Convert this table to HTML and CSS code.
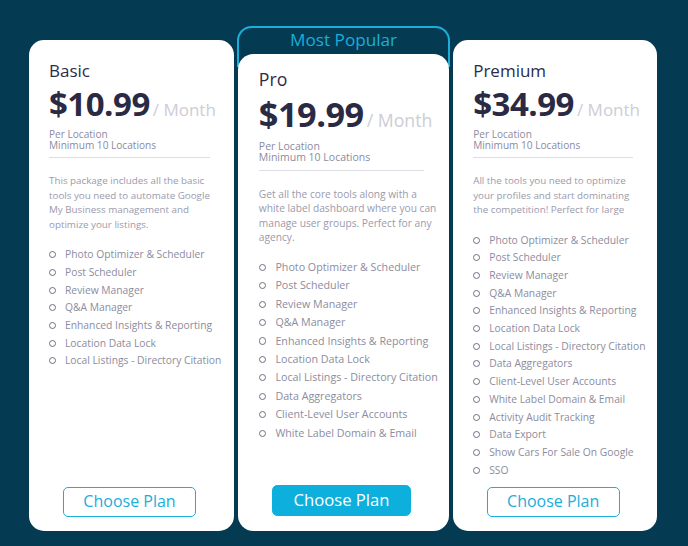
FILE: index.html
```html
<!DOCTYPE html>
<html lang="en">
<head>
<meta charset="utf-8">
<title>Pricing</title>
<link rel="stylesheet" href="styles.css">
</head>
<body>
<main class="plans">
  <section class="card card-basic">
    <h2 class="plan-name">Basic</h2>
    <div class="price"><span class="amount">$10.99</span><span class="period">/ Month</span></div>
    <p class="meta">Per Location<br>Minimum 10 Locations</p>
    <hr class="divider">
    <p class="desc">This package includes all the basic tools you need to automate Google My Business management and optimize your listings.</p>
    <ul class="features">
      <li>Photo Optimizer &amp; Scheduler</li>
      <li>Post Scheduler</li>
      <li>Review Manager</li>
      <li>Q&amp;A Manager</li>
      <li>Enhanced Insights &amp; Reporting</li>
      <li>Location Data Lock</li>
      <li>Local Listings - Directory Citation</li>
    </ul>
    <a class="btn" href="#">Choose Plan</a>
  </section>

  <div class="popular">
    <div class="popular-label">Most Popular</div>
    <section class="card card-pro">
      <h2 class="plan-name">Pro</h2>
      <div class="price"><span class="amount">$19.99</span><span class="period">/ Month</span></div>
      <p class="meta">Per Location<br>Minimum 10 Locations</p>
      <hr class="divider">
      <p class="desc">Get all the core tools along with a white label dashboard where you can manage user groups. Perfect for any agency.</p>
      <ul class="features">
        <li>Photo Optimizer &amp; Scheduler</li>
        <li>Post Scheduler</li>
        <li>Review Manager</li>
        <li>Q&amp;A Manager</li>
        <li>Enhanced Insights &amp; Reporting</li>
        <li>Location Data Lock</li>
        <li>Local Listings - Directory Citation</li>
        <li>Data Aggregators</li>
        <li>Client-Level User Accounts</li>
        <li>White Label Domain &amp; Email</li>
      </ul>
      <a class="btn btn-solid" href="#">Choose Plan</a>
    </section>
  </div>

  <section class="card card-premium">
    <h2 class="plan-name">Premium</h2>
    <div class="price"><span class="amount">$34.99</span><span class="period">/ Month</span></div>
    <p class="meta">Per Location<br>Minimum 10 Locations</p>
    <hr class="divider">
    <p class="desc">All the tools you need to optimize your profiles and start dominating the competition! Perfect for large</p>
    <ul class="features">
      <li>Photo Optimizer &amp; Scheduler</li>
      <li>Post Scheduler</li>
      <li>Review Manager</li>
      <li>Q&amp;A Manager</li>
      <li>Enhanced Insights &amp; Reporting</li>
      <li>Location Data Lock</li>
      <li>Local Listings - Directory Citation</li>
      <li>Data Aggregators</li>
      <li>Client-Level User Accounts</li>
      <li>White Label Domain &amp; Email</li>
      <li>Activity Audit Tracking</li>
      <li>Data Export</li>
      <li>Show Cars For Sale On Google</li>
      <li>SSO</li>
    </ul>
    <a class="btn" href="#">Choose Plan</a>
  </section>
</main>
</body>
</html>
```

FILE: styles.css
```css
* { box-sizing: border-box; }

html, body {
  margin: 0;
  padding: 0;
  background: #043a52;
  height: 546px;
  overflow: hidden;
}

body {
  font-family: "Open Sans", "Liberation Sans", sans-serif;
}

.plans {
  display: flex;
  align-items: flex-end;
  gap: 3px;
  height: 531px;
  padding-left: 29px;
}

.card {
  display: flex;
  flex-direction: column;
  width: 205px;
  height: 491px;
  background: #ffffff;
  border-radius: 15px;
  padding: 21px 12px 14px 20px;
}

.card-premium { width: 204px; }

.popular {
  zoom: 1.04;
  width: 205px;
  display: flex;
  flex-direction: column;
}

.popular-label {
  height: 40px;
  margin-bottom: -13px;
  border: 2px solid #1aaed9;
  border-bottom: 0;
  border-radius: 14px 14px 0 0;
  color: #1aaed9;
  font-size: 16.5px;
  line-height: 24px;
  text-align: center;
}

.card-pro {
  width: auto;
  margin: 0 1px;
  height: 459px;
  padding-top: 15px;
}

.plan-name {
  margin: 0;
  font-size: 17px;
  font-weight: 400;
  line-height: 20px;
  color: #2d2c47;
}

.price {
  margin-top: 5px;
  line-height: 36px;
  white-space: nowrap;
}

.amount {
  font-size: 33px;
  font-weight: 700;
  color: #2b2a45;
  letter-spacing: -0.5px;
}

.period {
  margin-left: 3px;
  font-size: 17px;
  color: #cdcdd6;
}

.meta {
  margin: 1px 0 0;
  font-size: 10.1px;
  line-height: 11px;
  color: #8b8ba0;
}

.divider {
  margin: 6px 12px 0 0;
  border: 0;
  border-top: 1px solid #dcdce2;
  height: 0;
}

.desc {
  margin: 16px 0 0;
  font-size: 9.8px;
  line-height: 14.6px;
  color: #9a9aac;
}

.card-pro .desc {
  margin-top: 15.5px;
  line-height: 13.9px;
}

.features {
  list-style: none;
  margin: 13px 0 0;
  padding: 0;
}

.card-pro .features {
  margin-top: 12.5px;
}

.features li {
  display: flex;
  align-items: center;
  gap: 9px;
  height: 17.7px;
  font-size: 10.3px;
  color: #8c8c9e;
  white-space: nowrap;
}

.features li::before {
  content: "";
  flex: none;
  width: 5px;
  height: 5px;
  margin-top: 1px;
  border: 1.5px solid #6f6f82;
  border-radius: 50%;
}

.btn {
  margin: auto 12px 0 0;
  align-self: center;
  width: 133px;
  height: 30px;
  border: 1.5px solid #1aaed9;
  border-radius: 5px;
  color: #1aaed9;
  font-size: 16px;
  line-height: 27px;
  text-align: center;
  text-decoration: none;
}

.btn-solid {
  background: #0db0dc;
  border-color: #0db0dc;
  color: #ffffff;
}
```
